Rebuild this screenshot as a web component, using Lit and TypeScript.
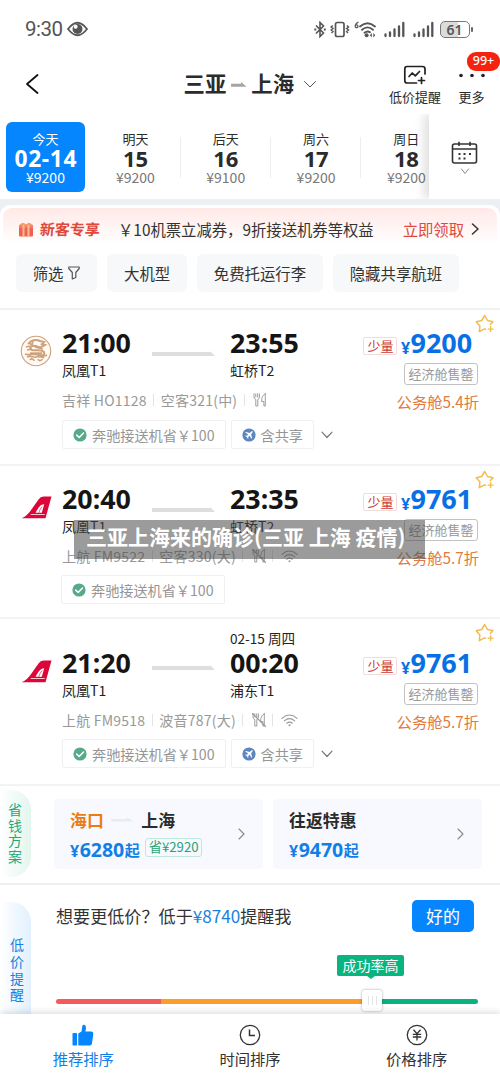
import { LitElement, html, css, svg, nothing } from "lit";
import { customElement, property } from "lit/decorators.js";
import { classMap } from "lit/directives/class-map.js";

interface Flight {
  kind: string;
  airline: "juneyao" | "shanghai";
  depart: string;
  from: string;
  arrive: string;
  to: string;
  nextDay?: string;
  code: string;
  plane: string;
  meal: boolean;
  wifi: boolean;
  share: boolean;
  price: string;
  discount: string;
}

const DAYS = [
  { label: "今天", day: "02-14", price: "¥9200" },
  { label: "明天", day: "15", price: "¥9200" },
  { label: "后天", day: "16", price: "¥9100" },
  { label: "周六", day: "17", price: "¥9200" },
  { label: "周日", day: "18", price: "¥9200" },
];

const FLIGHTS: Flight[] = [
  { kind: "first", airline: "juneyao", depart: "21:00", from: "凤凰T1", arrive: "23:55", to: "虹桥T2", code: "吉祥 HO1128", plane: "空客321(中)", meal: true, wifi: false, share: true, price: "9200", discount: "公务舱5.4折" },
  { kind: "second", airline: "shanghai", depart: "20:40", from: "凤凰T1", arrive: "23:35", to: "虹桥T2", code: "上航 FM9522", plane: "空客330(大)", meal: false, wifi: true, share: false, price: "9761", discount: "公务舱5.7折" },
  { kind: "third", airline: "shanghai", depart: "21:20", from: "凤凰T1", arrive: "00:20", to: "浦东T1", nextDay: "02-15 周四", code: "上航 FM9518", plane: "波音787(大)", meal: false, wifi: true, share: true, price: "9761", discount: "公务舱5.7折" },
];

const chevron = (w: number, h: number, d: string, color: string, sw: number) => html`
  <svg width=${w} height=${h} viewBox="0 0 ${w} ${h}" fill="none" stroke=${color} stroke-width=${sw} stroke-linecap="round" stroke-linejoin="round"><path d=${d} /></svg>`;

const juneyaoLogo = html`
  <svg width="32" height="32" viewBox="0 0 32 32" fill="none" stroke="#cda17a">
    <circle cx="16" cy="16" r="14.7" stroke-width="1.1" fill="#fffaf5" />
    <path d="M8 9c3-4 8-5 12-3l4 1-2 2 3 1-4 2c-3 1-5-2-8-1-3 0-4 3-1 4 4 1 9-1 12 2 1 2-1 4-4 4" stroke-width="2" />
    <path d="M6 12l4-1M7 15l5-1M5 19c4 2 9-1 14 1s6 1 8 0M7 22c4-2 6 1 9 0s6 0 8 1M10 25c1-2 4-1 4 1M18 24c1 3 4 1 4 0M9 8l3 2 1-4M15 12l8 2" stroke-width="1.6" />
    <path d="M10 18.5h12" stroke-width="2.4" />
  </svg>`;

const shanghaiLogo = html`
  <svg width="31" height="23" viewBox="0 0 31 23">
    <path d="M0.5 22.3Q6 20.500 11.500 12L17.500 3.500Q19.500 .5 22.500 .5H30.500L24.500 22.300Z" fill="#dc0738" />
    <path d="M14.500 16.800C17 13 18.500 8.500 23.200 8.300L20.800 16.800ZM10 18.200H24L23.500 19H9.500Z" fill="#fff" />
    <path d="M17.800 16.800Q19 12.500 21.200 10.500" stroke="#dc0738" stroke-width=".6" fill="none" />
  </svg>`;

const mealIcon = (served: boolean) => html`
  <svg width="14" height="14" viewBox="0 0 14 14" fill="none" stroke="#999" stroke-width=".95" stroke-linejoin="round" stroke-linecap="round">
    <path d="M1 .8V4Q1 6 2.800 6.400V13H4.800V6.400Q6.400 6 6.400 4V.8M2.800 .8V4M4.700 .8V4" />
    <path d="M12.300 .8V13H10.900V8.500H8.600Q8.400 2.500 12.300 .8Z" />
    ${served ? nothing : svg`<path d="M0.500 .5L13.500 13.500" stroke-width="1.2" />`}
  </svg>`;

const wifiIcon = html`
  <svg width="17" height="13" viewBox="0 0 17 13" fill="none" stroke="#999" stroke-width="1.1" stroke-linecap="round">
    <path d="M1 4.300Q8.500-2.200 16 4.300M3.300 6.800Q8.500 2.400 13.700 6.800M5.700 9.200Q8.500 7 11.300 9.200" />
    <circle cx="8.500" cy="11.300" r="1" fill="#999" stroke="none" />
  </svg>`;

const starIcon = html`
  <svg width="20" height="20" viewBox="0 0 20 20" fill="none" stroke="#f2bd4e" stroke-width="1.5" stroke-linejoin="round" stroke-linecap="round">
    <path d="M10.500 15.200L9.500 14.900L4.300 17.600L4.900 11.900L1.200 7.700L6.700 6.500L9.700 1.500L12.500 6.500L18 7.700L15.300 10.500" />
    <path d="M15.600 12.600v5M13.100 15.100h5" stroke-width="1.400" />
  </svg>`;

const checkIcon = html`
  <svg width="14" height="14" viewBox="0 0 14 14"><circle cx="7" cy="7" r="6.600" fill="#56aa8a" /><path d="M3.700 7.100L6.200 9.500L10.500 5" fill="none" stroke="#fff" stroke-width="1.500" stroke-linecap="round" stroke-linejoin="round" /></svg>`;

const planeIcon = html`
  <svg width="14" height="14" viewBox="0 0 14 14"><circle cx="7" cy="7" r="6.600" fill="#5c86c0" /><path d="M10.800 3.200L9.200 3.600L7.800 4.900L3.800 3.900L3.200 4.500L6.200 6.400L4.900 7.800L3.600 7.600L3.100 8.100L4.900 9.100L5.900 10.900L6.400 10.400L6.200 9.100L7.600 7.800L9.500 10.800L10.100 10.200L9.100 6.200L10.400 4.800Z" fill="#fff" /></svg>`;

const signalIcon = html`
  <svg width="21" height="17" viewBox="0 0 21 17" stroke="#555" stroke-width="2.300" stroke-linecap="round"><path d="M1.500 13.500v1.500M6 11.500V15M10.500 8.500V15M15 5.500V15M19.300 2V15" /></svg>`;

@customElement("status-bar")
export class StatusBar extends LitElement {
  static styles = css`
    :host { display: flex; height: 58px; align-items: center; padding: 0 27px 0 25px; color: #555; font-family: Roboto, "Noto Sans CJK SC", sans-serif; }
    .clock { font-size: 20.5px; letter-spacing: -0.5px; line-height: 24px; width: 42px; }
    .tray { display: flex; margin-left: auto; align-items: center; height: 18px; }
    .bt { margin-right: 4px; }
    .vib { margin-right: 4px; }
    .wifi { margin-right: 7px; }
    .sig { display: flex; margin-right: 8px; }
    .sig.last { margin-right: 6px; }
    .battery { box-sizing: border-box; width: 30px; height: 17px; border: 1.5px solid #777; border-radius: 5px; background: linear-gradient(90deg, #dcdcdc 61%, #fff 61%); font: 600 14px/15px "Noto Sans", sans-serif; text-align: center; color: #555; padding-right: 1px; }
    .nub { width: 2px; height: 5px; margin-left: 1px; background: #666; border-radius: 1px; }
  `;
  render() {
    return html`
      <span class="clock">9:30</span>
      <svg width="21" height="16" viewBox="0 0 21 16"><path d="M1 8Q10.500-4.500 20 8Q10.500 20.500 1 8Z" fill="none" stroke="#555" stroke-width="1.800" /><circle cx="10.500" cy="8" r="5" fill="#555" /><circle cx="8.600" cy="5.800" r="2" fill="#fff" /></svg>
      <div class="tray">
        <svg class="bt" width="12" height="17" viewBox="0 0 12 17" fill="none" stroke="#555" stroke-width="1.600"><path d="M2 4.500L9.500 12L6 15.500V1.500L9.500 5L2 12.500" /><path d="M.3 8.500h2M9.800 8.500h2" stroke-width="1.900" /></svg>
        <svg class="vib" width="20" height="17" viewBox="0 0 20 17" fill="none" stroke="#555"><rect x="5.500" y="1.500" width="8.500" height="14" rx="1.800" stroke-width="1.700" /><path d="M2.800 4.500L1 6L3 7.500L1 9L3 10.500L1.500 12M16.800 4.500L18.600 6L16.600 7.500L18.600 9L16.600 10.500L18 12" stroke-width="1.400" /></svg>
        <svg class="wifi" width="23" height="17" viewBox="0 0 23 17" fill="none" stroke="#555" stroke-width="1.800" stroke-linecap="round"><path d="M4 1.200Q1 3 1.200 5.300A1.400 1.400 0 1 0 2.500 3.900" stroke-width="1.200" /><path d="M6 5.500Q13.500-1 21 5.500M8 8.800Q13.500 4 19 8.800M10.500 11.800Q13.500 9.400 16 11.300" /><circle cx="12.600" cy="14.200" r="2" fill="#555" stroke="none" /><path d="M17.800 12L15.800 14.200L17.800 16.400ZM19.300 12L21.300 14.200L19.300 16.400Z" fill="#555" stroke="none" /></svg>
        <span class="sig">${signalIcon}</span><span class="sig last">${signalIcon}</span>
        <span class="battery">61</span><span class="nub"></span>
      </div>`;
  }
}

@customElement("route-header")
export class RouteHeader extends LitElement {
  static styles = css`
    :host { display: grid; grid-template-columns: 183.5px 1fr 60px 55px; height: 56px; color: #2b2b2b; }
    svg { display: block; }
    .back { padding: 15px 0 0 25px; }
    .title { display: flex; align-items: center; height: 52px; font-size: 21.4px; font-weight: 700; }
    .title span { line-height: 30px; margin-top: -3px; }
    .to { margin: 1px 4px 0 5px; }
    .down { margin-left: 9px; }
    .tool { display: flex; flex-direction: column; align-items: center; font-size: 13px; line-height: 18px; padding-top: 7px; }
    .tool span { white-space: nowrap; margin-top: 3px; }
    .more { position: relative; padding: 7px 2px 0 0; }
    .more .dots { margin: 8px 0 10px; }
    .tool .label { margin-top: 0; }
    .tool .badge { position: absolute; right: 0; top: -6px; margin: 0; box-sizing: border-box; width: 33px; height: 19px; border-radius: 9px; background: #f5220f; color: #fff; font: 500 12.5px/18px "Noto Sans", sans-serif; text-align: center; }
  `;
  render() {
    return html`
      <div class="back">${chevron(14, 22, "M12.500 2L2 11L12.500 20", "#111", 1.8)}</div>
      <div class="title">
        <span>三亚</span>
        <svg class="to" width="16" height="6" viewBox="0 0 16 6"><path d="M0 1.800H10V0L15.500 4.800H0Z" fill="#a5a5a5" /></svg>
        <span>上海</span>
        <div class="down">${chevron(14, 9, "M1.500 1.500L7 7L12.500 1.500", "#555", 1)}</div>
      </div>
      <div class="tool">
        <svg width="24" height="20" viewBox="0 0 24 20" fill="none" stroke="#222" stroke-width="1.700" stroke-linecap="round" stroke-linejoin="round"><path d="M22 9V4Q22 1.500 19.500 1.500H4Q1.800 1.500 1.800 4V15.500Q1.800 18 4 18H13.500" /><path d="M6 11.500L9.300 8L12.300 10.800L16.500 6.500M18.500 12.500V18.500M15.500 15.500H21.500" /></svg>
        <span>低价提醒</span>
      </div>
      <div class="tool more">
        <svg class="dots" width="28" height="5" viewBox="0 0 28 5" fill="#222"><circle cx="3" cy="2.500" r="1.800" /><circle cx="14" cy="2.500" r="1.800" /><circle cx="25" cy="2.500" r="1.800" /></svg>
        <span class="label">更多</span>
        <span class="badge">99+</span>
      </div>`;
  }
}

@customElement("date-strip")
export class DateStrip extends LitElement {
  static styles = css`
    :host { display: flex; height: 85px; overflow: hidden; color: #2b2b2b; }
    .days { display: flex; width: 429px; overflow: hidden; flex: none; }
    .cell { flex: none; box-sizing: border-box; width: 90.3px; height: 70px; margin-top: 8px; display: flex; flex-direction: column; align-items: center; background: linear-gradient(#eee, #eee) no-repeat right 15px / 1px 41px; }
    .cell.on { width: 79px; margin-left: 6px; margin-right: 5.3px; border-radius: 6px; background: #0586fe; color: #fff; }
    .cell:last-child { background: none; }
    .label { font-size: 13px; line-height: 16px; margin-top: 9px; }
    .num { font: 700 22px/23px "Noto Sans", sans-serif; letter-spacing: -0.2px; }
    .on .num { font-size: 22.8px; letter-spacing: .6px; margin-right: -.6px; }
    .price { font-size: 14px; line-height: 14px; color: #777; }
    .on .price { color: #fff; }
    .calendar { flex: 1; display: flex; flex-direction: column; align-items: center; padding-top: 27px; box-shadow: -5px 0 10px rgba(0, 0, 0, .13); background: #fff; }
    .small { margin-top: 3px; }
    svg { display: block; }
  `;
  render() {
    return html`
      <div class="days">
        ${DAYS.map((d, i) => html`<div class=${classMap({ cell: true, on: i === 0 })}><span class="label">${d.label}</span><span class="num">${d.day}</span><span class="price">${d.price}</span></div>`)}
      </div>
      <div class="calendar">
        <svg width="27" height="24" viewBox="0 0 27 24" fill="none" stroke="#333" stroke-width="1.600"><rect x="1.500" y="3" width="24" height="19" rx="2" /><path d="M1.500 8H25.500M8 .8V5M19 .8V5" /><path d="M7.500 13h2M12.500 13h2M18 13h2M7.500 17.500h2M12.500 17.500h2" stroke-width="2" /></svg>
        <div class="small">${chevron(10, 7, "M1.500 1L5 5.500L8.500 1", "#888", 1)}</div>
      </div>`;
  }
}

@customElement("promo-filters")
export class PromoFilters extends LitElement {
  static styles = css`
    :host { display: block; background: #ecf0f5; padding-top: 6px; }
    .sheet { box-sizing: border-box; height: 105px; background: #fff; border-radius: 10px 10px 0 0; padding: 3px 3px 0; border-bottom: 2px solid #eff2f7; }
    .promo { display: flex; align-items: center; height: 42px; padding: 0 17px 0 15px; border-radius: 9px 9px 0 0; background: linear-gradient(#ffe9e7, #fff 85%); font-size: 15.35px; line-height: 22px; color: #333; white-space: nowrap; }
    .new { font-weight: 700; color: #e0483d; font-size: 15px; margin: 0 18px 0 6px; transform: skewX(-4deg); }
    .get { margin-left: auto; color: #dc4a40; margin-right: 7px; }
    .chips { display: flex; gap: 10.300px; padding: 4px 13px; }
    .chip { display: flex; align-items: center; justify-content: center; height: 38px; box-sizing: border-box; border-radius: 6px; background: #f6f8fa; color: #333; font-size: 15.4px; line-height: 36px; padding: 0 16.650px 1px; white-space: nowrap; gap: 5px; }
    svg { display: block; flex: none; }
  `;
  render() {
    return html`
      <div class="sheet">
        <div class="promo">
          <svg width="16" height="15" viewBox="0 0 16 15"><path d="M2 2.500Q5-1 8 2.500Q11-1 14 2.500L13 4H3Z" fill="#f4a46a" /><rect x="1" y="3" width="14" height="11.500" rx="1" fill="#ef6253" /><rect x="1" y="2.800" width="14" height="3" fill="#f58271" /><path d="M4.500 3h2v11.500h-2zM9.500 3h2v11.500h-2z" fill="#f9bd8b" /></svg>
          <span class="new">新客专享</span>
          <span>￥10机票立减券，9折接送机券等权益</span>
          <span class="get">立即领取</span>
          ${chevron(9, 12, "M1.500 1L7 6L1.500 11", "#333", 1.5)}
        </div>
        <div class="chips">
          <span class="chip">筛选 <svg width="12" height="14" viewBox="0 0 12 14" fill="none" stroke="#555" stroke-width="1.200" stroke-linejoin="round"><path d="M.8 1H11.200V2.500L7.800 6.500V11.500L4.300 13V6.500L.8 2.500Z" /></svg></span>
          <span class="chip">大机型</span>
          <span class="chip">免费托运行李</span>
          <span class="chip">隐藏共享航班</span>
        </div>
      </div>`;
  }
}

@customElement("flight-card")
export class FlightCard extends LitElement {
  @property({ attribute: false }) flight!: Flight;
  static styles = css`
    :host { display: block; }
    svg { display: block; flex: none; }
    .card { position: relative; box-sizing: border-box; display: grid; grid-template-columns: 62px 1fr 140px; height: 156px; padding-top: 17px; border-bottom: 2px solid #f1f3f4; }
    .second { height: 153px; }
    .third { height: 167px; padding-top: 10px; }
    .logo { padding: 8px 0 0 20px; }
    .second .logo { padding: 13px 0 0 21px; }
    .third .logo { padding: 31px 0 0 21px; }
    .legs { display: flex; align-items: flex-end; height: 54px; }
    .third .legs { height: 72px; }
    .leg { width: 90px; }
    .next { display: block; font-size: 13.600px; line-height: 18px; color: #222; white-space: nowrap; }
    .time { display: block; font: 700 26.800px/32px "Noto Sans", sans-serif; color: #151515; white-space: nowrap; }
    .port { display: block; font-size: 14px; line-height: 22px; color: #222; }
    .arrow { width: 78px; align-self: center; }
    .third .arrow { padding-top: 5px; }
    .meta { display: flex; align-items: center; height: 20px; margin-top: 9px; font-size: 14px; letter-spacing: .22px; color: #999; white-space: nowrap; line-height: 20px; }
    .bar { width: 1px; height: 12px; background: #e3e3e3; margin: 0 6.500px; }
    .bar.wide { margin: 0 8.300px 0 6.500px; }
    .perks { display: flex; gap: 5px; margin-top: 10px; align-items: center; }
    .second .perks { margin: 9px 0 0 -1px; }
    .third .perks { margin-top: 9px; }
    .perk { display: flex; box-sizing: border-box; align-items: center; height: 29px; border: 1px solid #f0f0f0; border-radius: 2px; padding: 0 10px; gap: 5px; font-size: 14.15px; line-height: 26px; color: #969696; white-space: nowrap; }
    .open { margin-left: 2px; }
    .fare { display: flex; flex-direction: column; align-items: flex-end; padding-right: 21px; }
    .third .fare { padding-top: 18px; }
    .amount { display: flex; align-items: center; height: 32px; margin-right: 7px; color: #096fe4; }
    .few { box-sizing: border-box; height: 18px; border: 1px solid #f4dbd9; border-radius: 2px; font-size: 13px; line-height: 15px; padding: 0 3px; color: #cd3a34; margin: 6px 3.500px 0 0; }
    .yen { font: 700 16px/18px "Noto Sans", sans-serif; margin: 9px .5px 0 0; }
    .sum { font: 700 27px/32px "Noto Sans", sans-serif; letter-spacing: -0.100px; }
    .sold { box-sizing: border-box; height: 22px; margin: 4px 1px 0 0; border: 1px solid #c2c2c2; border-radius: 3px; padding: 0 3.500px; font-size: 13px; line-height: 19px; color: #999; }
    .off { font-size: 15.300px; line-height: 22px; margin-top: 5px; color: #e17a3d; }
    .star { position: absolute; right: 5px; top: 4px; }
  `;
  render() {
    const f = this.flight;
    return html`
      <div class="card ${f.kind}">
        <div class="logo">${f.airline === "juneyao" ? juneyaoLogo : shanghaiLogo}</div>
        <div>
          <div class="legs">
            <div class="leg"><span class="time">${f.depart}</span><span class="port">${f.from}</span></div>
            <div class="arrow"><svg width="64" height="6" viewBox="0 0 64 6"><path d="M0 1H58V0L63 5H0Z" fill="#dedede" /></svg></div>
            <div class="leg">${f.nextDay ? html`<span class="next">${f.nextDay}</span>` : nothing}<span class="time">${f.arrive}</span><span class="port">${f.to}</span></div>
          </div>
          <div class="meta">
            <span>${f.code}</span><span class="bar"></span><span>${f.plane}</span><span class="bar wide"></span>
            ${mealIcon(f.meal)}${f.wifi ? html`<span class="bar wide"></span>${wifiIcon}` : nothing}
          </div>
          <div class="perks">
            <span class="perk">${checkIcon}<span>奔驰接送机省￥100</span></span>
            ${f.share ? html`<span class="perk">${planeIcon}<span>含共享</span></span><span class="open">${chevron(12, 8, "M1 1.200L6 6.500L11 1.200", "#777", 1.2)}</span>` : nothing}
          </div>
        </div>
        <div class="fare">
          <div class="amount"><span class="few">少量</span><span class="yen">¥</span><span class="sum">${f.price}</span></div>
          <span class="sold">经济舱售罄</span>
          <span class="off">${f.discount}</span>
        </div>
        <div class="star">${starIcon}</div>
      </div>`;
  }
}

@customElement("saving-plans")
export class SavingPlans extends LitElement {
  static styles = css`
    :host { display: flex; box-sizing: border-box; height: 99px; border-bottom: 2px solid #edf1f4; }
    svg { display: block; }
    .tab { box-sizing: border-box; width: 31px; height: 87px; margin: 4px 23px 0 0; padding: 12px 8px 0; border-radius: 0 20px 20px 0; background: linear-gradient(90deg, #fff, #e3f6ee); color: #25a778; font-size: 14px; line-height: 15.500px; flex: none; }
    .plan { box-sizing: border-box; display: flex; align-items: center; justify-content: space-between; width: 209px; height: 70px; margin: 13px 10px 0 0; padding: 0 18px 0 16px; border-radius: 4px; background: #f8f9fe; }
    .names { display: flex; align-items: center; font-size: 16.900px; font-weight: 700; line-height: 24px; color: #2b2b2b; margin-top: 2px; }
    .orange { color: #ec7b14; }
    .to { margin: 0 8.500px 0 7px; }
    .cost { display: flex; align-items: center; height: 26px; margin-top: 5px; font-weight: 700; color: #127fe6; white-space: nowrap; }
    .yen { font: 700 16px/20px "Noto Sans", sans-serif; padding: 2px .5px 0 0; }
    .sum { font: 700 19.500px/26px "Noto Sans", sans-serif; }
    .from { font-size: 15px; line-height: 20px; margin-left: .5px; }
    .save { box-sizing: border-box; height: 19px; margin: -4px 0 0 5.500px; border: 1px solid #bfe8da; border-radius: 3px; padding: 0 2.500px; font-size: 13.200px; font-weight: 400; line-height: 15px; color: #23a377; }
  `;
  render() {
    const next = chevron(7, 12, "M1 1L6 6L1 11", "#888", 1.1);
    return html`
      <div class="tab">省钱方案</div>
      <div class="plan">
        <div>
          <div class="names"><span class="orange">海口</span><svg class="to" width="22" height="5" viewBox="0 0 22 5"><path d="M0 2H16V0L22 4.500H0Z" fill="#e9ebee" /></svg><span>上海</span></div>
          <div class="cost"><span class="yen">¥</span><span class="sum">6280</span><span class="from">起</span><span class="save">省¥2920</span></div>
        </div>
        ${next}
      </div>
      <div class="plan">
        <div>
          <div class="names"><span>往返特惠</span></div>
          <div class="cost"><span class="yen">¥</span><span class="sum">9470</span><span class="from">起</span></div>
        </div>
        ${next}
      </div>`;
  }
}

@customElement("price-alert")
export class PriceAlert extends LitElement {
  static styles = css`
    :host { display: flex; height: 129px; overflow: hidden; }
    .tab { box-sizing: border-box; width: 31px; height: 130px; margin: 17px 25px 0 0; padding: 34px 7px 0 10px; border-radius: 0 20px 0 0; background: linear-gradient(90deg, #fff, #e2f0fe); color: #177fe0; font-size: 14px; line-height: 16.800px; flex: none; }
    .main { flex: 1; padding-right: 22px; }
    .ask { display: flex; align-items: center; justify-content: space-between; height: 32px; margin-top: 15px; font-size: 17.100px; color: #333; padding-right: 4px; white-space: nowrap; }
    .text { margin-top: -2px; }
    .ask b { font-weight: 400; color: #1a80e0; }
    .ok { width: 62px; height: 32px; border-radius: 5px; background: #0586fe; color: #fff; font-size: 17px; line-height: 31px; text-align: center; }
    .slider { position: relative; margin-top: 67px; }
    .track { height: 5px; border-radius: 3px; background: linear-gradient(90deg, #f65959 25%, #fb9d26 25% 74%, #09b37f 74%); }
    .thumb { position: absolute; left: 306px; top: -9px; width: 20px; height: 21px; border-radius: 3px; background: #fff linear-gradient(90deg, #e4e4e4 1px, transparent 1px 4px, #e4e4e4 4px 5px, transparent 5px 8px, #e4e4e4 8px 9px, transparent 9px) no-repeat 6px 6px / 10px 9px; box-shadow: 0 0 3px rgba(0, 0, 0, .35); }
    .tip { position: absolute; left: 281px; top: -44px; width: 67px; height: 21px; border-radius: 2px; background: #0ab47f; color: #fff; font-size: 14px; line-height: 20px; text-align: center; }
    .tip::after { content: ""; position: absolute; left: 30px; top: 21px; border: 4px solid transparent; border-top: 3px solid #0ab47f; border-bottom: 0; }
  `;
  render() {
    return html`
      <div class="tab">低价提醒</div>
      <div class="main">
        <div class="ask"><span class="text">想要更低价？低于<b>¥8740</b>提醒我</span><span class="ok">好的</span></div>
        <div class="slider"><div class="track"></div><div class="thumb"></div><div class="tip">成功率高</div></div>
      </div>`;
  }
}

@customElement("sort-bar")
export class SortBar extends LitElement {
  static styles = css`
    :host { position: relative; display: grid; grid-template-columns: repeat(3, 1fr); height: 65px; background: #fff; box-shadow: 0 -2px 6px rgba(0, 0, 0, .13); }
    .item { display: flex; flex-direction: column; align-items: center; padding-top: 10px; font-size: 15.300px; line-height: 22px; color: #333; }
    .item span { margin-top: 1px; }
    .on { color: #0f80e8; }
    svg { display: block; }
  `;
  render() {
    return html`
      <div class="item on">
        <svg width="22" height="22" viewBox="0 0 22 22" fill="#0586fe"><rect x=".5" y="9" width="4.500" height="12.500" rx=".8" /><path d="M6.300 9.500L9.500 7.500L10.300 2Q10.800 .5 12.300 .8Q14.300 1.500 14 4.500L13.300 7.500H19.500Q21.600 7.500 21.300 10L20 19.500Q19.600 21.500 17.700 21.500H6.300Z" /></svg>
        <span>推荐排序</span>
      </div>
      <div class="item">
        <svg width="22" height="22" viewBox="0 0 22 22" fill="none" stroke="#333" stroke-width="1.300"><circle cx="11" cy="11" r="9.700" /><path d="M10.500 5.500V11.500H16" stroke-width="1.500" /></svg>
        <span>时间排序</span>
      </div>
      <div class="item">
        <svg width="22" height="22" viewBox="0 0 22 22" fill="none" stroke="#333" stroke-width="1.300"><circle cx="11" cy="11" r="9.700" /><path d="M7.500 5.800L11 9.800L14.500 5.800M11 9.800V16.500M6.800 10.300H15.200M6.800 13H15.200" /></svg>
        <span>价格排序</span>
      </div>`;
  }
}

@customElement("app-root")
export class AppRoot extends LitElement {
  static styles = css`
    :host { position: relative; display: block; width: 500px; height: 1079px; overflow: hidden; background: #fff; font-family: "Noto Sans CJK SC", "Noto Sans", sans-serif; }
    .caption { position: absolute; left: 74px; top: 520px; width: 351px; height: 39px; box-sizing: border-box; padding: 0 0 0 12px; background: rgba(72, 72, 72, .55); color: #fff; font-size: 21px; font-weight: 700; line-height: 33px; white-space: nowrap; }
  `;
  render() {
    return html`
      <status-bar></status-bar>
      <route-header></route-header>
      <date-strip></date-strip>
      <promo-filters></promo-filters>
      ${FLIGHTS.map((f) => html`<flight-card .flight=${f}></flight-card>`)}
      <saving-plans></saving-plans>
      <price-alert></price-alert>
      <sort-bar></sort-bar>
      <div class="caption">三亚上海来的确诊(三亚 上海 疫情)</div>`;
  }
}
